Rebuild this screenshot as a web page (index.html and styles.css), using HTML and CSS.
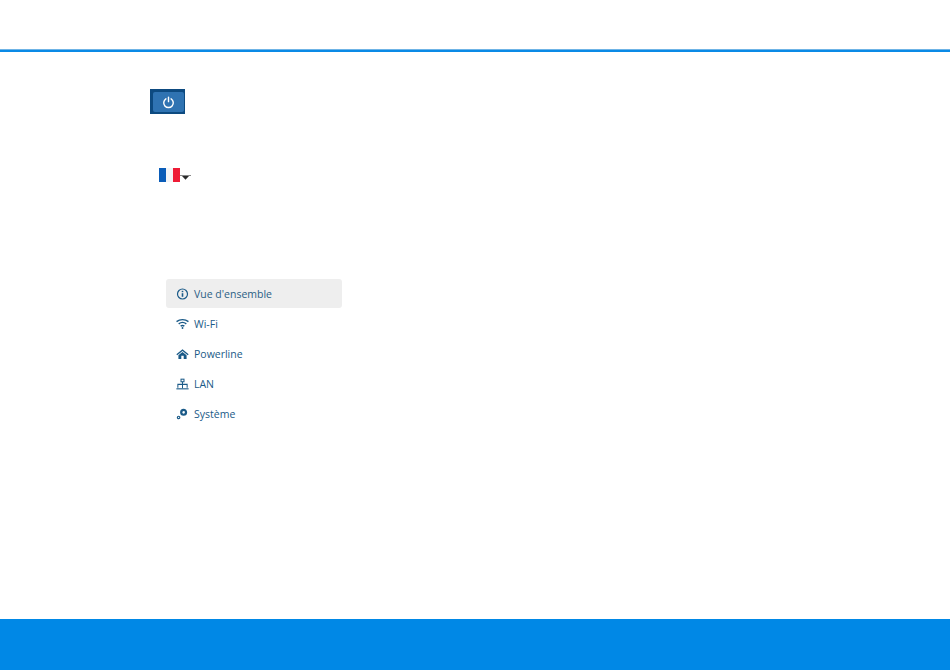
FILE: index.html
```html
<!DOCTYPE html>
<html lang="fr">
<head>
<meta charset="utf-8">
<title>Vue d'ensemble</title>
<link rel="stylesheet" href="styles.css">
</head>
<body>
<div class="page">
  <header class="topbar"></header>
  <main class="content">
    <button class="power" type="button" aria-label="Arrêt">
      <span class="power-inner">
        <svg class="power-icon" viewBox="0 0 12 12" width="13" height="13" fill="none" stroke="#fff" stroke-width="1.3" stroke-linecap="round"><path d="M3.6 2.600a4.400 4.400 0 1 0 4.800 0"/><path d="M6 1v4.200"/></svg>
      </span>
    </button>
    <div class="lang">
      <span class="flag"><span class="flag-b"></span><span class="flag-w"></span><span class="flag-r"></span></span>
      <svg class="caret" viewBox="0 0 11 5" width="11" height="5"><path d="M0 0h11v1H0z" fill="#8a8a8a"/><path d="M2 1h7L5.500 4.800z" fill="#2a2a2a"/></svg>
    </div>
    <nav class="menu">
      <a class="item active">
        <svg class="ico" viewBox="0 0 12 12" fill="none" stroke="#1a5a88"><circle cx="6" cy="6" r="5" stroke-width="1.200"/><path d="M6 5.200v3.600" stroke-width="1.600"/><path d="M6 2.800v1.400" stroke-width="1.600"/></svg>
        <span>Vue d'ensemble</span>
      </a>
      <a class="item">
        <svg class="ico" viewBox="0 0 14 12" fill="none" stroke="#1a5a88" stroke-width="1.500"><path d="M.6 3.400C4.200.6 9.800.6 13.400 3.400"/><path d="M2.900 5.900c2.400-1.900 5.800-1.900 8.200 0"/><path d="M5 8.300c1.200-.9 2.800-.9 4 0"/><circle cx="7" cy="10.300" r="1" fill="#1a5a88" stroke="none"/></svg>
        <span>Wi-Fi</span>
      </a>
      <a class="item">
        <svg class="ico" viewBox="0 0 14 12" fill="#1a5a88"><path d="M7 .8.400 6.400l.9 1L7 2.700l5.700 4.700.9-1z"/><path d="M2.600 7.400 7 3.800l4.400 3.600V11.400H8.300V8H5.700v3.400H2.600z"/></svg>
        <span>Powerline</span>
      </a>
      <a class="item">
        <svg class="ico" viewBox="0 0 14 12" fill="none" stroke="#1a5a88" stroke-width="1.100"><rect x="5.400" y=".8" width="3.200" height="2.800"/><path d="M7 3.600v7M2 10V6.400h10V10"/><path d="M.4 11.200h13.200" stroke-width="1.200"/></svg>
        <span>LAN</span>
      </a>
      <a class="item">
        <svg class="ico" viewBox="0 0 14 12" fill="none" stroke="#1a5a88"><circle cx="8.200" cy="4.200" r="2.600" stroke-width="2.400"/><circle cx="2.800" cy="9.700" r="1.300" stroke-width="1.300"/></svg>
        <span>Système</span>
      </a>
    </nav>
  </main>
  <footer class="footer"></footer>
</div>
</body>
</html>
```
FILE: styles.css
```css
* { box-sizing: border-box; }
html, body { margin: 0; padding: 0; height: 100%; background: #fff; }
.page { height: 671px; display: flex; flex-direction: column; overflow: hidden; padding-bottom: 1px; font-family: "Open Sans", sans-serif; }
.topbar { height: 52px; flex: none; border-bottom: 2px solid #0a8ae6; box-shadow: inset 0 -1px 0 #6fb4e6; }
.content { flex: 1; padding: 37px 0 0 150px; display: flex; flex-direction: column; align-items: flex-start; }
.power { width: 35px; height: 25px; padding: 3px 1px 2px 3px; border: 0; background: #0d4a80; display: flex; }
.power-inner { flex: 1; background: #2f73b2; border-radius: 2px; display: flex; align-items: center; justify-content: center; }
.power-icon { display: block; }
.lang { margin: 54px 0 0 9px; display: flex; align-items: flex-end; }
.flag { display: flex; width: 21px; height: 14px; }
.flag-b { flex: 1; background: #0a5cb8; }
.flag-w { flex: 1; background: #f4f4f6; }
.flag-r { flex: 1; background: #ee1c36; }
.caret { display: block; margin-bottom: 2px; }
.menu { margin: 97px 0 0 16px; width: 176px; display: flex; flex-direction: column; gap: 1px; }
.item { height: 29px; padding-left: 10px; display: flex; align-items: center; gap: 5px; border-radius: 3px; font-size: 10.500px; color: #1a5a88; }
.item.active { background: #eeeeee; color: #2b5f85; }
.ico { width: 13px; height: 12px; flex: none; }
.footer { height: 51px; flex: none; background: #0088e6; }
```
